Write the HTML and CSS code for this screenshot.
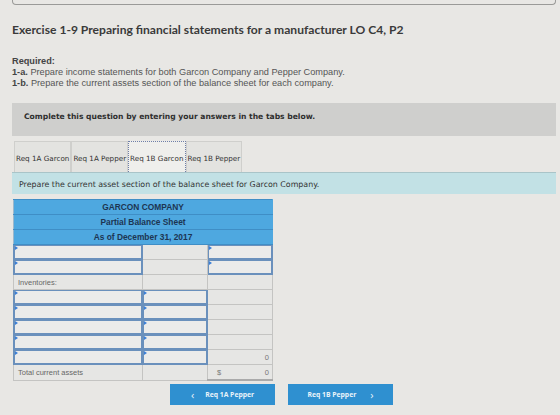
FILE: index.html
```html
<!DOCTYPE html>
<html>
<head>
<meta charset="utf-8">
<link rel="stylesheet" href="styles.css">
</head>
<body>
<div class="page">
  <div class="prev-box"></div>
  <h1 class="title">Exercise 1-9 Preparing financial statements for a manufacturer LO C4, P2</h1>
  <div class="required">
    <div class="req-label">Required:</div>
    <div><b>1-a.</b> Prepare income statements for both Garcon Company and Pepper Company.</div>
    <div><b>1-b.</b> Prepare the current assets section of the balance sheet for each company.</div>
  </div>
  <div class="instructions">Complete this question by entering your answers in the tabs below.</div>
  <div class="tabs">
    <div class="tab">Req 1A Garcon</div>
    <div class="tab">Req 1A Pepper</div>
    <div class="tab active">Req 1B Garcon</div>
    <div class="tab">Req 1B Pepper</div>
  </div>
  <div class="prompt">Prepare the current asset section of the balance sheet for Garcon Company.</div>

  <table class="sheet">
    <colgroup><col class="c1"><col class="c2"><col class="c3"></colgroup>
    <tr class="head"><td colspan="3">GARCON COMPANY</td></tr>
    <tr class="head"><td colspan="3">Partial Balance Sheet</td></tr>
    <tr class="head"><td colspan="3">As of December 31, 2017</td></tr>
    <tr><td class="in"><div class="input"></div></td><td></td><td class="in"><div class="input"></div></td></tr>
    <tr><td class="in"><div class="input"></div></td><td></td><td class="in"><div class="input"></div></td></tr>
    <tr><td class="label">Inventories:</td><td></td><td></td></tr>
    <tr><td class="in"><div class="input"></div></td><td class="in"><div class="input"></div></td><td></td></tr>
    <tr><td class="in"><div class="input"></div></td><td class="in"><div class="input"></div></td><td></td></tr>
    <tr><td class="in"><div class="input"></div></td><td class="in"><div class="input"></div></td><td></td></tr>
    <tr><td class="in"><div class="input"></div></td><td class="in"><div class="input"></div></td><td></td></tr>
    <tr><td class="in"><div class="input"></div></td><td class="in"><div class="input"></div></td><td class="num">0</td></tr>
    <tr class="total"><td class="label">Total current assets</td><td></td><td class="num"><span class="cur">$</span>0</td></tr>
  </table>

  <div class="nav">
    <div class="btn"><span class="chev">&lsaquo;</span>Req 1A Pepper</div>
    <div class="btn next">Req 1B Pepper<span class="chev">&rsaquo;</span></div>
  </div>
</div>
</body>
</html>
```

FILE: styles.css
```css
html, body {
  margin: 0;
  padding: 0;
  background: #e8e7e4;
}

.page {
  padding: 0 4px 0 12px;
  font-family: "Open Sans", "Liberation Sans", sans-serif;
  color: #333;
}

.prev-box {
  height: 4px;
  border: 1px solid #9a9a98;
  border-top: none;
  border-radius: 0 0 4px 4px;
}

.title {
  margin: 17px 0 0;
  font-family: Lato, "Open Sans", sans-serif;
  font-size: 12.1px;
  line-height: 16px;
  font-weight: 700;
  color: #3a3a3a;
}

.required {
  margin-top: 18px;
  font-family: "Liberation Sans", Arial, sans-serif;
  font-size: 9.2px;
  line-height: 11px;
  color: #555;
}
.required > div { white-space: nowrap; }
.required .req-label { font-weight: 700; color: #444; }
.required b { color: #444; }

.instructions {
  margin-top: 14px;
  height: 33px;
  box-sizing: border-box;
  padding: 8px 12px 0;
  background: #cfcfcd;
  font-family: "DejaVu Sans", Verdana, sans-serif;
  font-size: 7.6px;
  font-weight: 700;
  color: #2e2e2e;
  line-height: 11px;
}

.tabs {
  display: flex;
  margin: 5px 0 0 2px;
  height: 31px;
}
.tab {
  display: flex;
  align-items: center;
  padding: 2px 1px 0;
  border: 1px solid #cfcfcc;
  border-bottom: none;
  background: #e3e3e0;
  font-family: "DejaVu Sans", Verdana, sans-serif;
  font-size: 7.2px;
  color: #333;
  white-space: nowrap;
}
.tab.active {
  background: #efefec;
  border: 1px dotted #6f7fa8;
  border-bottom: none;
}

.prompt {
  height: 22px;
  box-sizing: border-box;
  padding: 6px 7px 0;
  background: #c2e1e5;
  border-top: 1px solid #a9c4c8;
  font-family: "DejaVu Sans", Verdana, sans-serif;
  font-size: 7.9px;
  line-height: 11px;
  color: #333;
}

.sheet {
  margin: 5px 0 0 1px;
  border-collapse: collapse;
  table-layout: fixed;
  width: 259px;
  font-family: "Liberation Sans", Arial, sans-serif;
  font-size: 7.5px;
}
.sheet col.c1 { width: 129px; }
.sheet col.c2 { width: 65px; }
.sheet col.c3 { width: 65px; }

.sheet td {
  height: 14px;
  padding: 0;
  border: 1px solid #c4c4c2;
  background: #e6e6e4;
  vertical-align: middle;
}
.sheet td.in {
  border-color: #6a90bc;
}
.sheet tr.head td {
  background: #4ea8e0;
  border: 1px solid #3f8ec6;
  border-left-color: #9cb8cc;
  border-right-color: #4ea8e0;
  text-align: center;
  font-weight: 700;
  color: #1d3552;
  font-size: 8.4px;
}

.sheet .input {
  position: relative;
  height: 14px;
  box-sizing: border-box;
  border: 1px solid #6a90bc;
  background: #ebebea;
}
/* small blue marker in the corner of each entry field */
.sheet .input::before {
  content: "";
  position: absolute;
  left: 0;
  top: 0;
  border-top: 2px solid transparent;
  border-bottom: 2px solid transparent;
  border-left: 3px solid #3b7fd6;
}

.sheet td.label {
  padding-left: 4px;
  color: #666;
}
.sheet td.num {
  text-align: right;
  padding-right: 3px;
  color: #777;
}
.sheet tr.total td.num {
  border-bottom: 2px solid #aaa;
}
.sheet .cur {
  float: left;
  padding-left: 9px;
  color: #777;
}

.nav {
  display: flex;
  gap: 13px;
  margin: 3px 0 0 158px;
}
.btn {
  width: 105px;
  height: 21px;
  display: flex;
  align-items: center;
  justify-content: center;
  background: #2f90d0;
  color: #e9f3fa;
  font-size: 6.8px;
  font-weight: 700;
}
.btn .chev {
  font-size: 11px;
  font-weight: 400;
  margin-right: 11px;
  line-height: 1;
}
.btn.next .chev {
  margin: 0 0 0 14px;
}
```
